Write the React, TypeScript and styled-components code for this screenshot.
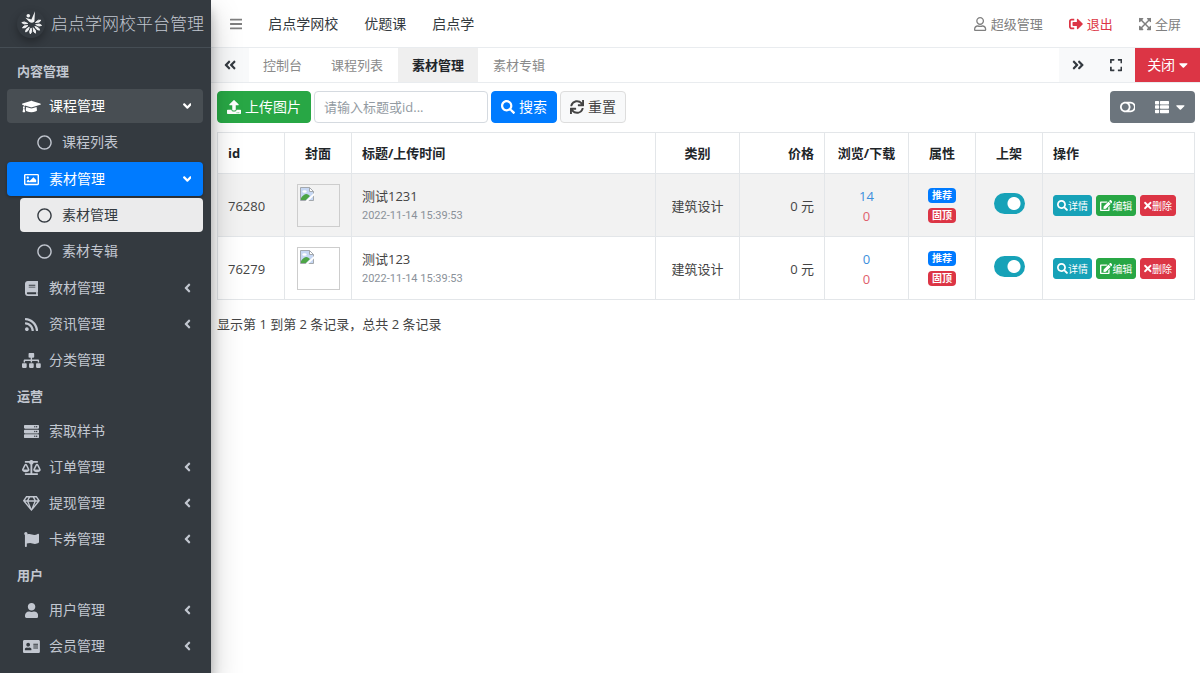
import React from "react";
import styled, { createGlobalStyle, css } from "styled-components";
import {
  FaGraduationCap, FaRegCircle, FaRegImage, FaBook, FaRss, FaSitemap, FaServer, FaBalanceScale,
  FaRegGem, FaFlag, FaUser, FaAddressCard, FaAngleDown, FaAngleLeft, FaAngleDoubleLeft,
  FaAngleDoubleRight, FaExpand, FaExpandArrowsAlt, FaSignOutAlt, FaRegUser, FaBars, FaUpload,
  FaSearch, FaSync, FaThList, FaToggleOff, FaEdit, FaTimes, FaCaretDown,
} from "react-icons/fa";
import type { IconType } from "react-icons";

/* Icons keep one height; their widths follow the proportions of each drawing */
const GlobalStyle = createGlobalStyle`
  *, *::before, *::after { box-sizing: border-box; }
  body {
    margin: 0;
    background: #fff;
    color: #212529;
    font-family: "Open Sans", "Noto Sans CJK SC", sans-serif;
    font-size: 13px;
    line-height: 20px;
  }
  button, input { font: inherit; }
  a { color: inherit; text-decoration: none; }
  ul { list-style: none; margin: 0; padding: 0; }
  svg { flex: none; }
  svg[viewBox="0 0 640 512"] { width: 1.25em; }
  svg[viewBox="0 0 576 512"] { width: 1.125em; }
  svg[viewBox="0 0 448 512"] { width: 0.875em; }
  svg[viewBox="0 0 352 512"] { width: 0.6875em; }
  svg[viewBox="0 0 320 512"] { width: 0.625em; }
  svg[viewBox="0 0 256 512"] { width: 0.5em; }
`;

const Shell = styled.div`
  display: flex;
  min-height: 100vh;
`;

/* Sidebar */
const Sidebar = styled.aside`
  flex: 0 0 211px;
  z-index: 2;
  background: #343a40;
  color: #c2c7d0;
  font-size: 14px;
  box-shadow: 0 14px 28px rgba(0, 0, 0, 0.25), 0 10px 10px rgba(0, 0, 0, 0.22);
`;

const Brand = styled.a`
  display: flex;
  align-items: center;
  gap: 6px;
  height: 48px;
  padding-left: 17px;
  border-bottom: 1px solid #454d54;
  font-size: 17px;
  font-weight: 300;
  white-space: nowrap;
`;

const LogoMark = styled.span`
  display: flex;
  border-radius: 50%;
  box-shadow: 0 4px 8px rgba(0, 0, 0, 0.3);
`;

const Menu = styled.nav`
  padding: 6px 8px 10px 7px;
`;

const MenuHeader = styled.h2`
  margin: 0;
  height: 35px;
  padding-left: 10px;
  font-size: 13px;
  font-weight: 700;
  line-height: 35px;
`;

const MenuItem = styled.li`
  margin-bottom: 2px;
`;

const SubMenu = styled.ul`
  padding: 2px 0 1px 13px;
  & > li:last-child { margin-bottom: 0; }
`;

type Tone = "plain" | "open" | "active" | "current";
const tones = {
  plain: css``,
  open: css`background: rgba(255, 255, 255, 0.1); color: #fff;`,
  active: css`background: #007bff; color: #fff; box-shadow: 0 1px 3px rgba(0, 0, 0, 0.3);`,
  current: css`background: rgba(255, 255, 255, 0.9); color: #343a40;`,
};

const MenuLink = styled.a<{ $tone: Tone }>`
  display: flex;
  align-items: center;
  gap: 7px;
  height: 34px;
  padding: 0 9px 0 14px;
  border-radius: 4px;
  ${(p) => tones[p.$tone]}
`;

const MenuIcon = styled.span`
  display: flex;
  justify-content: center;
  width: 21px;
  font-size: 15px;
`;

const MenuLabel = styled.span`
  flex: 1;
`;

const MenuArrow = styled.span`
  display: flex;
  justify-content: center;
  width: 14px;
`;

/* Main area */
const Main = styled.main`
  flex: 1;
  min-width: 0;
`;

const TopBar = styled.header`
  display: flex;
  align-items: center;
  justify-content: space-between;
  height: 48px;
  padding: 0 19px;
  border-bottom: 1px solid #e9ecef;
`;

const TopGroup = styled.nav<{ $size: number }>`
  display: flex;
  align-items: center;
  gap: 26px;
  font-size: ${(p) => p.$size}px;
`;

const TopLink = styled.a<{ $color?: string }>`
  display: flex;
  align-items: center;
  gap: 4px;
  color: ${(p) => p.$color ?? "#343a40"};
  & svg { font-size: 14px; }
`;

const MenuToggle = styled.button`
  display: flex;
  padding: 0;
  border: 0;
  background: none;
  color: #7f7f7f;
`;

const TabBar = styled.div`
  display: flex;
  height: 35px;
  border-bottom: 1px solid #e9ecef;
`;

const TabTool = styled.button`
  display: flex;
  align-items: center;
  justify-content: center;
  width: 38px;
  padding: 0;
  border: 0;
  background: #f8f9fa;
  color: #343a40;
  font-size: 14px;
`;

const CloseButton = styled.button`
  display: flex;
  align-items: center;
  justify-content: center;
  gap: 4px;
  width: 65px;
  padding: 0;
  border: 0;
  background: #dc3545;
  color: #fff;
  font-size: 14px;
`;

const Tabs = styled.nav`
  display: flex;
  flex: 1;
  gap: 1px;
`;

const Tab = styled.a<{ $active?: boolean }>`
  padding: 0 14px;
  line-height: 34px;
  color: ${(p) => (p.$active ? "#212529" : "#8a8a8a")};
  background: ${(p) => (p.$active ? "#efefef" : "transparent")};
  font-weight: ${(p) => (p.$active ? 700 : 400)};
`;

const Content = styled.section`
  padding: 8px 5px 8px 6px;
`;

const Toolbar = styled.form`
  display: flex;
  gap: 3px;
  margin-bottom: 9px;
  font-size: 14px;
`;

const buttonColors = {
  success: css`background: #28a745; border-color: #28a745; color: #fff;`,
  primary: css`background: #007bff; border-color: #007bff; color: #fff;`,
  light: css`background: #f8f9fa; border-color: #ddd; color: #444;`,
  info: css`background: #17a2b8; border-color: #17a2b8; color: #fff;`,
  danger: css`background: #dc3545; border-color: #dc3545; color: #fff;`,
};

const Button = styled.button<{ $kind: keyof typeof buttonColors }>`
  display: flex;
  align-items: center;
  gap: 4px;
  height: 32px;
  padding: 0 9px;
  border: 1px solid;
  border-radius: 4px;
  white-space: nowrap;
  ${(p) => buttonColors[p.$kind]}
`;

const SearchInput = styled.input`
  width: 174px;
  height: 32px;
  padding: 0 9px;
  border: 1px solid #d5dae0;
  border-radius: 4px;
  font-size: 13px;
  color: #495057;
  &::placeholder { color: #939ba2; }
`;

const ToolGroup = styled.div`
  display: flex;
  margin-left: auto;
  border-radius: 4px;
  background: #6c757d;
`;

const GroupButton = styled.button`
  display: flex;
  align-items: center;
  gap: 7px;
  padding: 0 10px;
  border: 0;
  background: none;
  color: #fff;
  font-size: 14px;
`;

const Table = styled.table`
  width: 100%;
  table-layout: fixed;
  border-collapse: collapse;
  color: #444;
`;

const Th = styled.th<{ $width?: number; $align?: string }>`
  width: ${(p) => (p.$width ? `${p.$width}px` : "auto")};
  height: 41px;
  padding: 0 10px;
  border: 1px solid #e3e6e9;
  color: #212529;
  text-align: ${(p) => p.$align ?? "center"};
  white-space: nowrap;
`;

const Row = styled.tr`
  &:nth-child(odd) { background: #f2f2f2; }
`;

const Td = styled.td<{ $align?: string }>`
  height: 63px;
  padding: 1px 10px 0;
  border: 1px solid #e3e6e9;
  text-align: ${(p) => p.$align ?? "center"};
  white-space: nowrap;
`;

const Cover = styled.div`
  display: flex;
  width: 43px;
  height: 43px;
  margin: 0 auto;
  padding: 1px;
  border: 1px solid #cdcdcd;
`;

const Time = styled.small`
  display: block;
  color: #8a9199;
  font-family: Roboto, sans-serif;
  font-size: 11px;
`;

const Count = styled.a<{ $color: string }>`
  display: block;
  color: ${(p) => p.$color};
`;

const Badges = styled.div`
  display: flex;
  flex-direction: column;
  align-items: center;
  gap: 5px;
`;

const Badge = styled.span<{ $color: string }>`
  padding: 0 4px;
  border-radius: 4px;
  background: ${(p) => p.$color};
  color: #fff;
  font-size: 10px;
  font-weight: 700;
  line-height: 15px;
`;

const Switch = styled.input`
  appearance: none;
  display: block;
  width: 31px;
  height: 21px;
  margin: 0 auto 4px;
  border-radius: 11px;
  background: radial-gradient(circle at 20px 50%, #fff 6px, #17a2b8 7px);
`;

const Actions = styled.div`
  display: flex;
  gap: 4px;
`;

const SmallButton = styled(Button)`
  gap: 0;
  height: 21px;
  padding: 0 3px;
  border-radius: 3px;
  font-size: 10px;
  & svg { font-size: 11px; }
`;

const Summary = styled.p`
  margin: 14px 0 0;
  color: #444;
`;

/* Burst of petals around a leaping figure */
const Logo = () => (
  <svg width="28" height="28" viewBox="0 0 28 28" fill="#f1f2f3" aria-hidden="true">
    <circle cx="11.3" cy="5.8" r="1.8" />
    <path d="M18 1.2 L17.4 11.6 Q15 14 12.2 11.8 L8.4 7.8 L14.4 9.6 Z" />
    {[68, 98, 128, 158, 188, 218, 248, 278].map((a) => (
      <path key={a} d="M14.7 10 Q12.6 6 14.7 4 Q16.8 6 14.7 10 Z" stroke="#f1f2f3" strokeWidth="0.8" transform={`rotate(${a} 14.7 14)`} />
    ))}
  </svg>
);

/* Placeholder that browsers draw for a picture that did not load */
const MissingPicture = () => (
  <svg width="16" height="16" viewBox="0 0 16 16" role="img" aria-label="封面">
    <path d="M1.5 1.5 H10.5 L14.5 5.5 V14.5 H1.5 Z" fill="#c6d7f3" stroke="#a3a8ad" />
    <path d="M10.5 1.5 V5.5 H14.5 Z" fill="#fff" stroke="#a3a8ad" />
    <ellipse cx="5.5" cy="5.5" rx="2.2" ry="1.2" fill="#fff" />
    <path d="M2 14 V12 Q6 6.5 9 8.5 L11 10 L7 14 Z" fill="#4da546" />
    <path d="M6 15.5 L15.5 6.5 V9 L8.8 15.5 Z" fill="#fff" />
  </svg>
);

type Entry = { label: string; icon: IconType; tone?: Tone; leaf?: boolean; children?: Entry[] };
const sections: { title: string; items: Entry[] }[] = [
  {
    title: "内容管理",
    items: [
      { label: "课程管理", icon: FaGraduationCap, tone: "open", children: [{ label: "课程列表", icon: FaRegCircle, leaf: true }] },
      {
        label: "素材管理", icon: FaRegImage, tone: "active",
        children: [
          { label: "素材管理", icon: FaRegCircle, tone: "current", leaf: true },
          { label: "素材专辑", icon: FaRegCircle, leaf: true },
        ],
      },
      { label: "教材管理", icon: FaBook },
      { label: "资讯管理", icon: FaRss },
      { label: "分类管理", icon: FaSitemap, leaf: true },
    ],
  },
  {
    title: "运营",
    items: [
      { label: "索取样书", icon: FaServer, leaf: true },
      { label: "订单管理", icon: FaBalanceScale },
      { label: "提现管理", icon: FaRegGem },
      { label: "卡券管理", icon: FaFlag },
    ],
  },
  {
    title: "用户",
    items: [
      { label: "用户管理", icon: FaUser },
      { label: "会员管理", icon: FaAddressCard },
    ],
  },
];

const Item = ({ entry }: { entry: Entry }) => {
  const Icon = entry.icon;
  return (
    <MenuItem>
      <MenuLink href="#" $tone={entry.tone ?? "plain"}>
        <MenuIcon><Icon /></MenuIcon>
        <MenuLabel>{entry.label}</MenuLabel>
        {!entry.leaf && <MenuArrow>{entry.children ? <FaAngleDown /> : <FaAngleLeft />}</MenuArrow>}
      </MenuLink>
      {entry.children && (
        <SubMenu>{entry.children.map((c) => <Item key={c.label} entry={c} />)}</SubMenu>
      )}
    </MenuItem>
  );
};

const rows = [
  { id: 76280, title: "测试1231", time: "2022-11-14 15:39:53", views: 14, downloads: 0 },
  { id: 76279, title: "测试123", time: "2022-11-14 15:39:53", views: 0, downloads: 0 },
];

export default function App() {
  return (
    <Shell>
      <GlobalStyle />
      <Sidebar>
        <Brand href="#"><LogoMark><Logo /></LogoMark>启点学网校平台管理</Brand>
        <Menu>
          {sections.map((s) => (
            <React.Fragment key={s.title}>
              <MenuHeader>{s.title}</MenuHeader>
              <ul>{s.items.map((i) => <Item key={i.label} entry={i} />)}</ul>
            </React.Fragment>
          ))}
        </Menu>
      </Sidebar>
      <Main>
        <TopBar>
          <TopGroup $size={14}>
            <MenuToggle aria-label="菜单"><FaBars /></MenuToggle>
            <TopLink href="#">启点学网校</TopLink>
            <TopLink href="#">优题课</TopLink>
            <TopLink href="#">启点学</TopLink>
          </TopGroup>
          <TopGroup $size={13}>
            <TopLink href="#" $color="#808080"><FaRegUser />超级管理</TopLink>
            <TopLink href="#" $color="#dc3545"><FaSignOutAlt />退出</TopLink>
            <TopLink href="#" $color="#808080"><FaExpandArrowsAlt />全屏</TopLink>
          </TopGroup>
        </TopBar>
        <TabBar>
          <TabTool aria-label="向左"><FaAngleDoubleLeft /></TabTool>
          <Tabs>
            <Tab href="#">控制台</Tab>
            <Tab href="#">课程列表</Tab>
            <Tab href="#" $active>素材管理</Tab>
            <Tab href="#">素材专辑</Tab>
          </Tabs>
          <TabTool aria-label="向右"><FaAngleDoubleRight /></TabTool>
          <TabTool aria-label="展开"><FaExpand /></TabTool>
          <CloseButton>关闭<FaCaretDown /></CloseButton>
        </TabBar>
        <Content>
          <Toolbar onSubmit={(e) => e.preventDefault()}>
            <Button type="button" $kind="success"><FaUpload />上传图片</Button>
            <SearchInput type="text" aria-label="标题或id" placeholder="请输入标题或id..." />
            <Button type="submit" $kind="primary"><FaSearch />搜索</Button>
            <Button type="reset" $kind="light"><FaSync />重置</Button>
            <ToolGroup>
              <GroupButton type="button" aria-label="切换视图"><FaToggleOff /></GroupButton>
              <GroupButton type="button" aria-label="列"><FaThList /><FaCaretDown /></GroupButton>
            </ToolGroup>
          </Toolbar>
          <Table>
            <thead>
              <tr>
                <Th $width={67} $align="left">id</Th>
                <Th $width={67}>封面</Th>
                <Th $align="left">标题/上传时间</Th>
                <Th $width={84}>类别</Th>
                <Th $width={85} $align="right">价格</Th>
                <Th $width={84}>浏览/下载</Th>
                <Th $width={67}>属性</Th>
                <Th $width={67}>上架</Th>
                <Th $width={152} $align="left">操作</Th>
              </tr>
            </thead>
            <tbody>
              {rows.map((r) => (
                <Row key={r.id}>
                  <Td $align="left">{r.id}</Td>
                  <Td><Cover><MissingPicture /></Cover></Td>
                  <Td $align="left">{r.title}<Time>{r.time}</Time></Td>
                  <Td>建筑设计</Td>
                  <Td $align="right">0 元</Td>
                  <Td>
                    <Count href="#" $color="#3d8fdc">{r.views}</Count>
                    <Count href="#" $color="#e0606c">{r.downloads}</Count>
                  </Td>
                  <Td>
                    <Badges>
                      <Badge $color="#007bff">推荐</Badge>
                      <Badge $color="#dc3545">固顶</Badge>
                    </Badges>
                  </Td>
                  <Td><Switch type="checkbox" aria-label="上架" defaultChecked /></Td>
                  <Td $align="left">
                    <Actions>
                      <SmallButton type="button" $kind="info"><FaSearch />详情</SmallButton>
                      <SmallButton type="button" $kind="success"><FaEdit />编辑</SmallButton>
                      <SmallButton type="button" $kind="danger"><FaTimes />删除</SmallButton>
                    </Actions>
                  </Td>
                </Row>
              ))}
            </tbody>
          </Table>
          <Summary>显示第 1 到第 2 条记录，总共 2 条记录</Summary>
        </Content>
      </Main>
    </Shell>
  );
}
